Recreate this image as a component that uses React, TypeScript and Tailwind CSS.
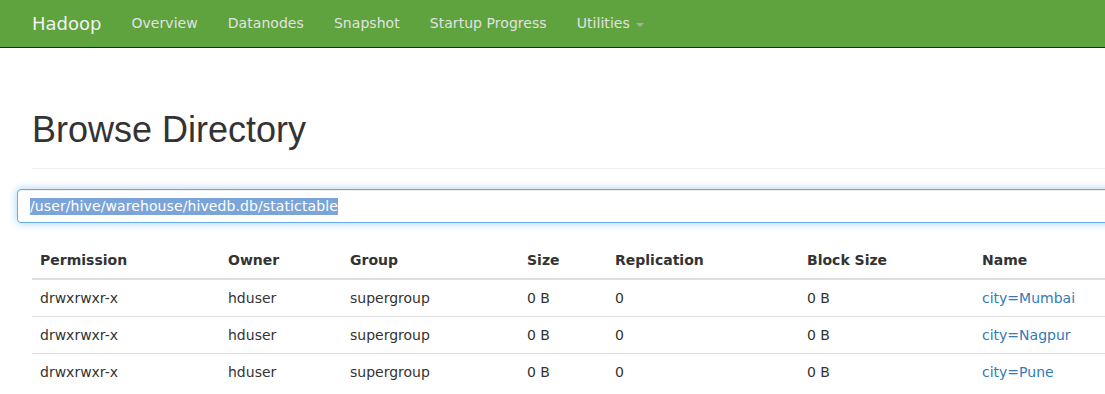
import React from "react";

type Row = {
  permission: string;
  owner: string;
  group: string;
  size: string;
  replication: string;
  blockSize: string;
  name: string;
};

const ROWS: Row[] = [
  { permission: "drwxrwxr-x", owner: "hduser", group: "supergroup", size: "0 B", replication: "0", blockSize: "0 B", name: "city=Mumbai" },
  { permission: "drwxrwxr-x", owner: "hduser", group: "supergroup", size: "0 B", replication: "0", blockSize: "0 B", name: "city=Nagpur" },
  { permission: "drwxrwxr-x", owner: "hduser", group: "supergroup", size: "0 B", replication: "0", blockSize: "0 B", name: "city=Pune" },
];

const NAV_LINKS = ["Overview", "Datanodes", "Snapshot", "Startup Progress"];

const dejavu = "font-['DejaVu_Sans',sans-serif]";

function Navbar(): React.ReactElement {
  return (
    <nav className={`flex h-12 items-center border-b border-[#1e2a17] bg-[#5fa33e] pl-[32px] ${dejavu}`}>
      <span className="pr-[15px] text-[18px] text-[#f2f2f2]">Hadoop</span>
      <ul className="flex items-center">
        {NAV_LINKS.map((link) => (
          <li key={link} className="px-[15px] text-[14px] tracking-[0.05px] text-[#e2e2e2]">
            {link}
          </li>
        ))}
        <li className="flex items-center px-[15px] text-[14px] tracking-[0.05px] text-[#e2e2e2]">
          Utilities
          <span className="ml-[6px] mt-[2px] h-0 w-0 border-x-[4px] border-t-[4px] border-x-transparent border-t-[#a8b0a4]" />
        </li>
      </ul>
    </nav>
  );
}

export default function App(): React.ReactElement {
  return (
    <div className="h-[394px] w-[1105px] overflow-hidden bg-white">
      <Navbar />
      <div className="w-[1300px]">
        <div className="ml-[32px] mt-[62px] border-b border-[#eeeeee] pb-[18px]">
          <h1 className="text-[36px] leading-[40px] text-[#333333] font-['Liberation_Sans',Arial,sans-serif]">
            Browse Directory
          </h1>
        </div>

        <div className={`ml-[17px] mt-[20px] flex h-[34px] items-center rounded-[4px] border border-[#66afe9] bg-white px-[12px] shadow-[inset_0_1px_1px_rgba(0,0,0,0.075),0_0_8px_rgba(102,175,233,0.6)] ${dejavu}`}>
          <span className="bg-[#7ba5d8] text-[14px] leading-[17px] tracking-[0.1px] text-white">
            /user/hive/warehouse/hivedb.db/statictable
          </span>
        </div>

        <table className={`ml-[32px] mt-[19px] w-[1260px] border-collapse text-left text-[14px] text-[#333333] ${dejavu}`}>
          <colgroup>
            <col className="w-[188px]" />
            <col className="w-[122px]" />
            <col className="w-[177px]" />
            <col className="w-[88px]" />
            <col className="w-[192px]" />
            <col className="w-[175px]" />
            <col />
          </colgroup>
          <thead>
            <tr className="border-b-2 border-[#dddddd]">
              {["Permission", "Owner", "Group", "Size", "Replication", "Block Size", "Name"].map((h) => (
                <th key={h} className="px-[8px] py-[8px] font-bold leading-[20px]">
                  {h}
                </th>
              ))}
            </tr>
          </thead>
          <tbody>
            {ROWS.map((row) => (
              <tr key={row.name} className="border-t border-[#dddddd] first:border-t-0">
                <td className="px-[8px] py-[8px] leading-[20px]">{row.permission}</td>
                <td className="px-[8px] py-[8px] leading-[20px]">{row.owner}</td>
                <td className="px-[8px] py-[8px] leading-[20px]">{row.group}</td>
                <td className="px-[8px] py-[8px] leading-[20px]">{row.size}</td>
                <td className="px-[8px] py-[8px] leading-[20px]">{row.replication}</td>
                <td className="px-[8px] py-[8px] leading-[20px]">{row.blockSize}</td>
                <td className="px-[8px] py-[8px] leading-[20px]">
                  <a className="text-[#337ab7]">{row.name}</a>
                </td>
              </tr>
            ))}
          </tbody>
        </table>
      </div>
    </div>
  );
}
